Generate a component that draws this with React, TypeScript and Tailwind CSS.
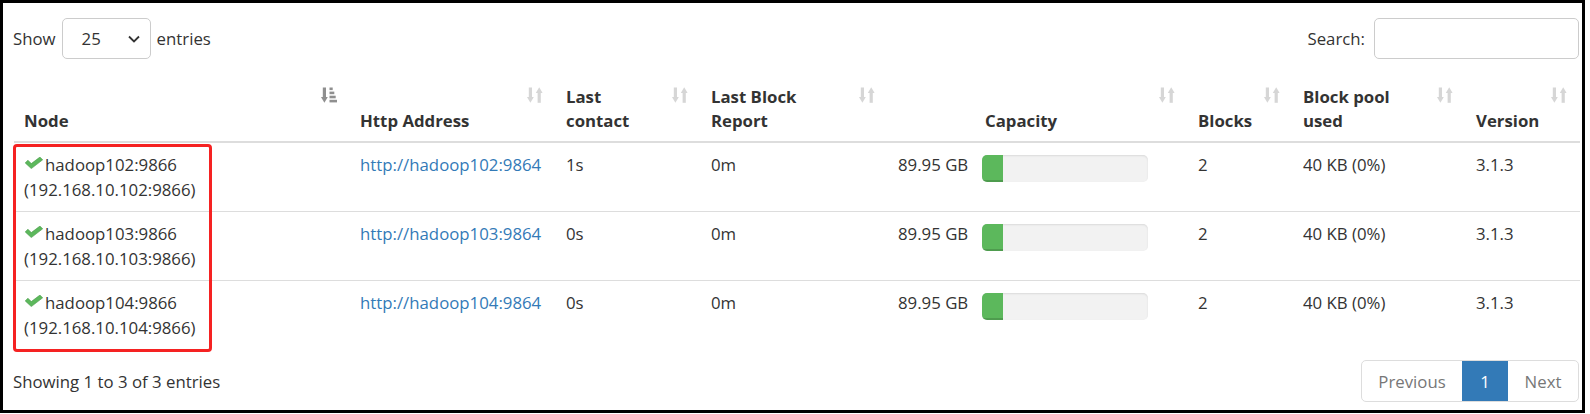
import React from 'react';

type SortState = 'asc' | 'both';

const SortIcon: React.FC<{ state: SortState }> = ({ state }) => (
  <svg
    width="16"
    height="16"
    viewBox="0 0 16 16"
    className={`absolute top-[12px] right-[13px] ${state === 'asc' ? 'text-[#8f8f8f]' : 'text-[#d6d6d6]'}`}
    fill="currentColor"
  >
    <rect x="1.8" y="0.5" width="3.2" height="10.5" />
    <polygon points="0,10 6.8,10 3.4,15.8" />
    {state === 'asc' ? (
      <>
        <rect x="8.5" y="0.5" width="3.2" height="2.6" />
        <rect x="8.5" y="4.6" width="4.8" height="2.6" />
        <rect x="8.5" y="8.7" width="6.2" height="2.6" />
        <rect x="8.5" y="12.8" width="7.5" height="2.6" />
      </>
    ) : (
      <>
        <rect x="10.6" y="5" width="3.2" height="10.8" />
        <polygon points="8.8,6 15.6,6 12.2,0.2" />
      </>
    )}
  </svg>
);

const CheckIcon = () => (
  <svg width="18" height="12" viewBox="0 0 18 12" className="inline-block ml-[1px] mr-[2px] align-[2px]">
    <path d="M0.2 5.9 L2.9 3.2 L6.3 6.6 L14.9 0.1 L17.7 2.8 L6.3 11.6 Z" fill="#5cb85c" stroke="#4a9a4a" strokeWidth="0.6" />
  </svg>
);

const columns: { label: React.ReactNode; w: number; sort: SortState; extra?: string }[] = [
  { label: 'Node', w: 336, sort: 'asc' },
  { label: 'Http Address', w: 206, sort: 'both' },
  { label: <>Last<br />contact</>, w: 145, sort: 'both' },
  { label: <>Last Block<br />Report</>, w: 187, sort: 'both' },
  { label: 'Capacity', w: 300, sort: 'both', extra: 'pl-[97px]' },
  { label: 'Blocks', w: 105, sort: 'both' },
  { label: <>Block pool<br />used</>, w: 173, sort: 'both' },
  { label: 'Version', w: 114, sort: 'both' },
];

const nodes = [
  { name: 'hadoop102', ip: '192.168.10.102', contact: '1s' },
  { name: 'hadoop103', ip: '192.168.10.103', contact: '0s' },
  { name: 'hadoop104', ip: '192.168.10.104', contact: '0s' },
];

export default function App() {
  return (
    <div className="relative w-[1585px] h-[413px] border-[3px] border-black bg-white text-[#333] font-['Open_Sans',sans-serif] text-[16.8px] leading-[25px] pl-[10px] pr-[3px] pt-[15px]">
      {/* top controls */}
      <div className="flex items-center justify-between h-[41px]">
        <div className="flex items-center">
          <span>Show</span>
          <div className="ml-[6px] w-[89px] h-[41px] border border-[#ccc] rounded-[5px] flex items-center pl-[19px] pr-[10px] justify-between">
            <span>25</span>
            <svg width="12" height="8" viewBox="0 0 12 8" fill="none" stroke="#333" strokeWidth="1.8">
              <polyline points="1,1.5 6,6.5 11,1.5" />
            </svg>
          </div>
          <span className="ml-[6px]">entries</span>
        </div>
        <div className="flex items-center">
          <span>Search:</span>
          <div className="ml-[9px] w-[205px] h-[41px] border border-[#ccc] rounded-[5px]" />
        </div>
      </div>

      {/* table */}
      <table className="mt-[16px] ml-[1px] w-[1566px] table-fixed">
        <colgroup>
          {columns.map((c, i) => (
            <col key={i} style={{ width: c.w }} />
          ))}
        </colgroup>
        <thead>
          <tr>
            {columns.map((c, i) => (
              <th
                key={i}
                className={`relative text-left align-bottom font-bold leading-[24px] pt-[10px] pb-[8px] pl-[10px] pr-[10px] border-b-2 border-[#ddd] ${c.extra ?? ''}`}
              >
                {c.label}
                <SortIcon state={c.sort} />
              </th>
            ))}
          </tr>
        </thead>
        <tbody>
          {nodes.map((n, i) => (
            <tr key={n.name} className={i > 0 ? 'border-t border-[#ddd]' : ''}>
              <td className="align-top pt-[9px] pb-[9px] pl-[10px]">
                <CheckIcon />
                {n.name}:9866
                <br />({n.ip}:9866)
              </td>
              <td className="align-top pt-[9px] pb-[9px] pl-[10px]">
                <a className="text-[#337ab7]">http://{n.name}:9864</a>
              </td>
              <td className="align-top pt-[9px] pb-[9px] pl-[10px]">{n.contact}</td>
              <td className="align-top pt-[9px] pb-[9px] pl-[10px]">0m</td>
              <td className="align-top pt-[9px] pb-[9px] pl-[10px]">
                <div className="flex items-start">
                  <span className="w-[84px] whitespace-nowrap">89.95 GB</span>
                  <div className="mt-[3px] w-[166px] h-[27px] rounded-[5px] bg-[#f2f2f2] shadow-[inset_0_1px_2px_rgba(0,0,0,0.1)] overflow-hidden">
                    <div className="w-[21px] h-full bg-[#5cb85c] shadow-[inset_0_-2px_0_rgba(0,0,0,0.15)]" />
                  </div>
                </div>
              </td>
              <td className="align-top pt-[9px] pb-[9px] pl-[10px]">2</td>
              <td className="align-top pt-[9px] pb-[9px] pl-[10px]">40 KB (0%)</td>
              <td className="align-top pt-[9px] pb-[9px] pl-[10px]">3.1.3</td>
            </tr>
          ))}
        </tbody>
      </table>

      {/* footer */}
      <div className="mt-[11px] flex items-center justify-between">
        <span>Showing 1 to 3 of 3 entries</span>
        <div className="flex h-[42px] border border-[#ddd] rounded-[5px] overflow-hidden">
          <div className="w-[100px] flex items-center justify-center text-[#777]">Previous</div>
          <div className="w-[46px] flex items-center justify-center bg-[#337ab7] text-white">1</div>
          <div className="w-[70px] flex items-center justify-center text-[#777]">Next</div>
        </div>
      </div>

      {/* annotation */}
      <div className="absolute left-[10px] top-[141px] w-[199px] h-[208px] border-[3px] border-[#f52222] rounded-[4px] pointer-events-none" />
    </div>
  );
}
